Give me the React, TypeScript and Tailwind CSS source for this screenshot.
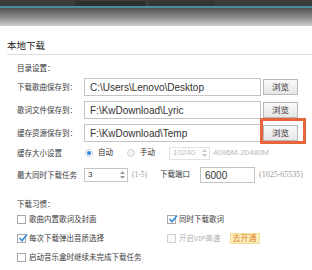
import React from "react";

const Label = ({ children, w = "w-[67px]" }: { children: React.ReactNode; w?: string }) => (
  <div className={`${w} shrink-0 text-[7.5px] text-[#3a3a3a] leading-[10px]`}>{children}</div>
);

const Browse = () => (
  <div className="ml-[2px] w-[35px] h-[16px] border border-[#b8b8b8] bg-gradient-to-b from-[#fafafa] to-[#e6e6e6] flex items-center justify-center text-[8.5px] text-[#333]">
    浏览
  </div>
);

const PathRow = ({ label, value }: { label: string; value: string }) => (
  <div className="flex items-center h-[18px]">
    <Label>{label}</Label>
    <div className="w-[177px] h-[18px] border border-[#c4c4c4] flex items-center pl-[5px] text-[10px] text-[#333] font-['Liberation_Sans',Arial,sans-serif]">
      {value}
    </div>
    <Browse />
  </div>
);

const Spinner = ({ light }: { light?: boolean }) => (
  <div className="flex flex-col items-center gap-[2px]">
    <svg width="5" height="3" viewBox="0 0 5 3">
      <path d="M0 3 L2.5 0 L5 3 Z" fill={light ? "#c8c8c8" : "#9a9a9a"} />
    </svg>
    <svg width="5" height="3" viewBox="0 0 5 3">
      <path d="M0 0 L2.5 3 L5 0 Z" fill={light ? "#c8c8c8" : "#9a9a9a"} />
    </svg>
  </div>
);

const Radio = ({ checked }: { checked?: boolean }) => (
  <div
    className={`w-[8px] h-[8px] rounded-full border flex items-center justify-center ${
      checked ? "border-[#bcd6ea] bg-white" : "border-[#d4d4d4] bg-[#f2f2f2]"
    }`}
  >
    {checked && <div className="w-[4px] h-[4px] rounded-full bg-[#2f86d6]" />}
  </div>
);

const Check = ({ checked, disabled }: { checked?: boolean; disabled?: boolean }) => (
  <div
    className={`w-[9px] h-[9px] border relative shrink-0 ${
      disabled ? "border-[#d0d0d0] bg-[#fafafa]" : "border-[#a8a8a8] bg-white"
    }`}
  >
    {checked && (
      <svg className="absolute left-[0px] top-[-2px]" width="10" height="10" viewBox="0 0 10 10">
        <path d="M1.5 5 L4 7.8 L9 1.5" stroke="#3a8fd8" strokeWidth="1.6" fill="none" />
      </svg>
    )}
  </div>
);

const CheckItem = ({
  checked,
  disabled,
  children,
  w,
}: {
  checked?: boolean;
  disabled?: boolean;
  children: React.ReactNode;
  w?: string;
}) => (
  <div className={`flex items-center ${w ?? ""}`}>
    <Check checked={checked} disabled={disabled} />
    <span className={`ml-[3px] text-[7.5px] leading-[10px] ${disabled ? "text-[#b0b0b0]" : "text-[#3a3a3a]"}`}>
      {children}
    </span>
  </div>
);

export default function App() {
  return (
    <div className="w-[312px] h-[270px] bg-white overflow-hidden relative font-['Noto_Sans','Noto_Sans_CJK_SC',sans-serif]">
      {/* top window chrome */}
      <div className="h-[6px] bg-[#3c3c3c] flex items-center">
        <div className="ml-[75px] w-[70px] h-[5px] bg-[#2e2e2e]" />
        <div className="ml-[4px] w-[66px] h-[5px] bg-[#343434]" />
      </div>
      <div className="h-[2px] bg-[#4a8c9c]" />
      <div className="h-[18px] bg-gradient-to-b from-[#525252] via-[#8a8a8a] to-[#cfcfcf]" />

      {/* heading */}
      <div className="mt-[14px] ml-[7px] pb-[2px] border-b border-[#dedede] text-[9.5px] leading-[12px] text-[#222]">
        本地下载
      </div>

      <div className="pl-[17px]">
        <div className="mt-[8px] text-[7.5px] leading-[10px] text-[#333]">目录设置：</div>

        <div className="mt-[5px] flex flex-col gap-[5px]">
          <PathRow label="下载歌曲保存到：" value="C:\Users\Lenovo\Desktop" />
          <PathRow label="歌词文件保存到：" value="F:\KwDownload\Lyric" />
          <PathRow label="缓存资源保存到：" value="F:\KwDownload\Temp" />
        </div>

        {/* cache size */}
        <div className="mt-[4px] h-[14px] flex items-center">
          <Label>缓存大小设置</Label>
          <div className="flex items-center w-[43px] pl-[1px]">
            <Radio checked />
            <span className="ml-[5px] text-[7.5px] text-[#333]">自动</span>
          </div>
          <div className="flex items-center w-[42px]">
            <Radio />
            <span className="ml-[5px] text-[7.5px] text-[#333]">手动</span>
          </div>
          <div className="w-[41px] h-[13px] border border-[#e2e2e2] flex items-center justify-between pl-[3px] pr-[2px] text-[8px] text-[#bdbdbd] font-['Liberation_Sans',Arial,sans-serif]">
            10240
            <Spinner light />
          </div>
          <span className="ml-[3px] text-[8px] text-[#b8b8b8] font-['Liberation_Sans',Arial,sans-serif]">
            4096M-20480M
          </span>
        </div>

        {/* max tasks */}
        <div className="mt-[7px] h-[16px] flex items-center">
          <Label>最大同时下载任务</Label>
          <div className="w-[44px] h-[14px] border border-[#c4c4c4] flex items-center justify-between pl-[3px] pr-[2px] text-[8px] text-[#333] font-['Liberation_Sans',Arial,sans-serif]">
            3
            <Spinner />
          </div>
          <span className="ml-[4px] w-[28px] text-[7.5px] text-[#999] font-['Liberation_Serif',serif]">(1-5)</span>
          <span className="w-[40px] text-[7.5px] text-[#333]">下载端口</span>
          <div className="w-[55px] h-[16px] border border-[#c4c4c4] flex items-center pl-[4px] text-[10px] text-[#333] font-['Liberation_Sans',Arial,sans-serif]">
            6000
          </div>
          <span className="ml-[4px] text-[8px] text-[#999] font-['Liberation_Serif',serif]">(1025-65535)</span>
        </div>

        <div className="mt-[16px] text-[7.5px] leading-[10px] text-[#333]">下载习惯：</div>

        <div className="mt-[4px] flex flex-col gap-[7px]">
          <div className="flex items-center h-[12px]">
            <CheckItem w="w-[150px]">歌曲内置歌词及封面</CheckItem>
            <CheckItem checked>同时下载歌词</CheckItem>
          </div>
          <div className="flex items-center h-[12px]">
            <CheckItem w="w-[150px]" checked>
              每次下载弹出音质选择
            </CheckItem>
            <CheckItem disabled>开启VIP高速</CheckItem>
            <div className="ml-[9px] w-[30px] h-[11px] bg-[#fcefc0] border border-[#f2dc9a] flex items-center justify-center text-[8px] text-[#e0821e]">
              去开通
            </div>
          </div>
          <div className="flex items-center h-[12px]">
            <CheckItem>启动音乐盒时继续未完成下载任务</CheckItem>
          </div>
        </div>
      </div>

      {/* orange annotation box */}
      <div className="absolute left-[260px] top-[118px] w-[46px] h-[26px] border-[3px] border-[#e8643a]" />
    </div>
  );
}
